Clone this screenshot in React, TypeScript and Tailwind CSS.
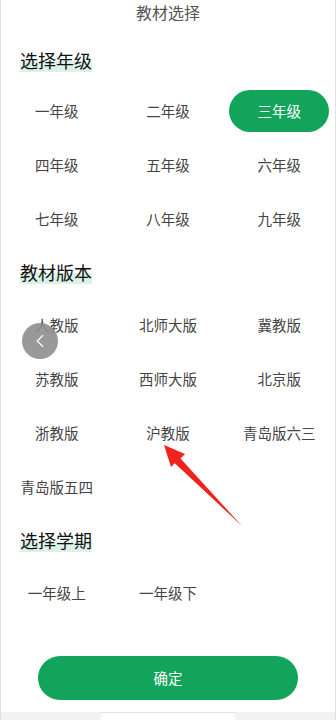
import { ChevronLeft } from "lucide-react";

const grades = ["一年级", "二年级", "三年级", "四年级", "五年级", "六年级", "七年级", "八年级", "九年级"];
const editions = ["人教版", "北师大版", "冀教版", "苏教版", "西师大版", "北京版", "浙教版", "沪教版", "青岛版六三", "青岛版五四"];
const terms = ["一年级上", "一年级下"];

function Heading({ text, className }: { text: string; className: string }) {
  return (
    <div className={`flex items-center px-[19px] ${className}`}>
      <span className="text-[18px] leading-[24px] text-[#111] bg-[linear-gradient(transparent_55%,#dcf2e7_55%)]">
        {text}
      </span>
    </div>
  );
}

function Options({ items, selected }: { items: string[]; selected?: string }) {
  return (
    <div className="grid grid-cols-3">
      {items.map((item) => (
        <div key={item} className="h-[54px] flex items-center justify-center">
          {item === selected ? (
            <span className="w-[100px] h-[42px] rounded-full bg-[#13a45b] text-white text-[14.5px] flex items-center justify-center">
              {item}
            </span>
          ) : (
            <span className="text-[14.5px] text-[#444]">{item}</span>
          )}
        </div>
      ))}
    </div>
  );
}

export default function App() {
  return (
    <div
      className="relative w-[336px] h-[720px] bg-white overflow-hidden flex flex-col border-x border-[#e2e2e2]"
      style={{ fontFamily: '"Noto Sans CJK SC", "Noto Sans", sans-serif' }}
    >
      <div className="h-[24px] flex items-center justify-center text-[16px] text-[#555]">教材选择</div>

      <Heading text="选择年级" className="h-[60px] pt-[12px]" />
      <Options items={grades} selected="三年级" />

      <Heading text="教材版本" className="h-[52px]" />
      <Options items={editions} />

      <Heading text="选择学期" className="h-[52px]" />
      <Options items={terms} />

      <div className="flex-1" />
      <div className="px-[37px]">
        <button className="w-full h-[44px] rounded-full bg-[#13a45b] text-white text-[14.5px]">确定</button>
      </div>
      <div className="h-[12px]" />
      <div className="h-[8px] bg-[#f2f2f2] flex justify-center">
        <div className="w-[134px] h-[8px] bg-white border-t border-[#e4e4e4]" />
      </div>

      {/* floating back button */}
      <div className="absolute left-[21px] top-[323px] w-[36px] h-[36px] rounded-full bg-[#8e8e8e]/90 flex items-center justify-center">
        <ChevronLeft className="w-[22px] h-[22px] text-white" strokeWidth={1.2} />
      </div>

      {/* red annotation arrow */}
      <svg className="absolute left-0 top-0 pointer-events-none" width="336" height="720">
        <polygon
          points="163,445 184,454 179.5,458.5 241,526 173.8,463.2 170,467"
          fill="#f0231c"
        />
      </svg>
    </div>
  );
}
